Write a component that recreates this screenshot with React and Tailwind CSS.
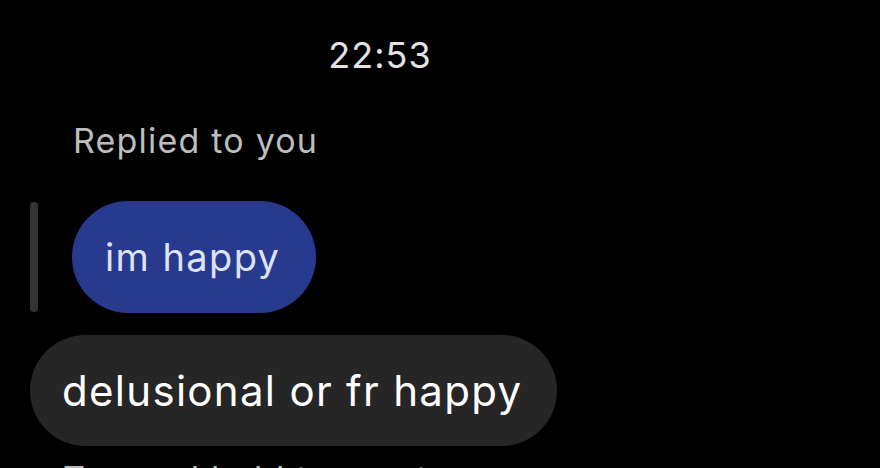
export default function App() {
  return (
    <div
      className="w-[880px] h-[468px] overflow-hidden bg-black flex flex-col"
      style={{ fontFamily: "Inter, 'Liberation Sans', sans-serif" }}
    >
      <div className="h-[37px] shrink-0" />
      <div className="text-center text-[36px] leading-[36px] tracking-[1px] text-[#e2e2e2] pr-[120px]">22:53</div>
      <div className="h-[51px] shrink-0" />
      <div className="pl-[73px] text-[34px] leading-[34px] tracking-[1.2px] text-[#bdbdbd]">Replied to you</div>
      <div className="h-[43px] shrink-0" />
      <div className="flex items-center pl-[30px] gap-[34px]">
        <div className="w-[8px] h-[110px] rounded-full bg-[#333333]" />
        <div className="h-[112px] pl-[33px] pr-[36px] rounded-full bg-[#283a8e] flex items-center text-[38px] tracking-[1.4px] text-[#dfe2f7]">
          im happy
        </div>
      </div>
      <div className="h-[22px] shrink-0" />
      <div className="pl-[30px] flex">
        <div className="h-[111px] pl-[32px] pr-[35px] rounded-full bg-[#262626] flex items-center text-[42px] tracking-[1.3px] text-white">
          delusional or fr happy
        </div>
      </div>
      <div className="h-[16px] shrink-0" />
      <div className="pl-[63px] text-[34px] leading-[34px] tracking-[1.2px] text-[#bdbdbd] whitespace-nowrap">Tap and hold to react</div>
    </div>
  );
}
